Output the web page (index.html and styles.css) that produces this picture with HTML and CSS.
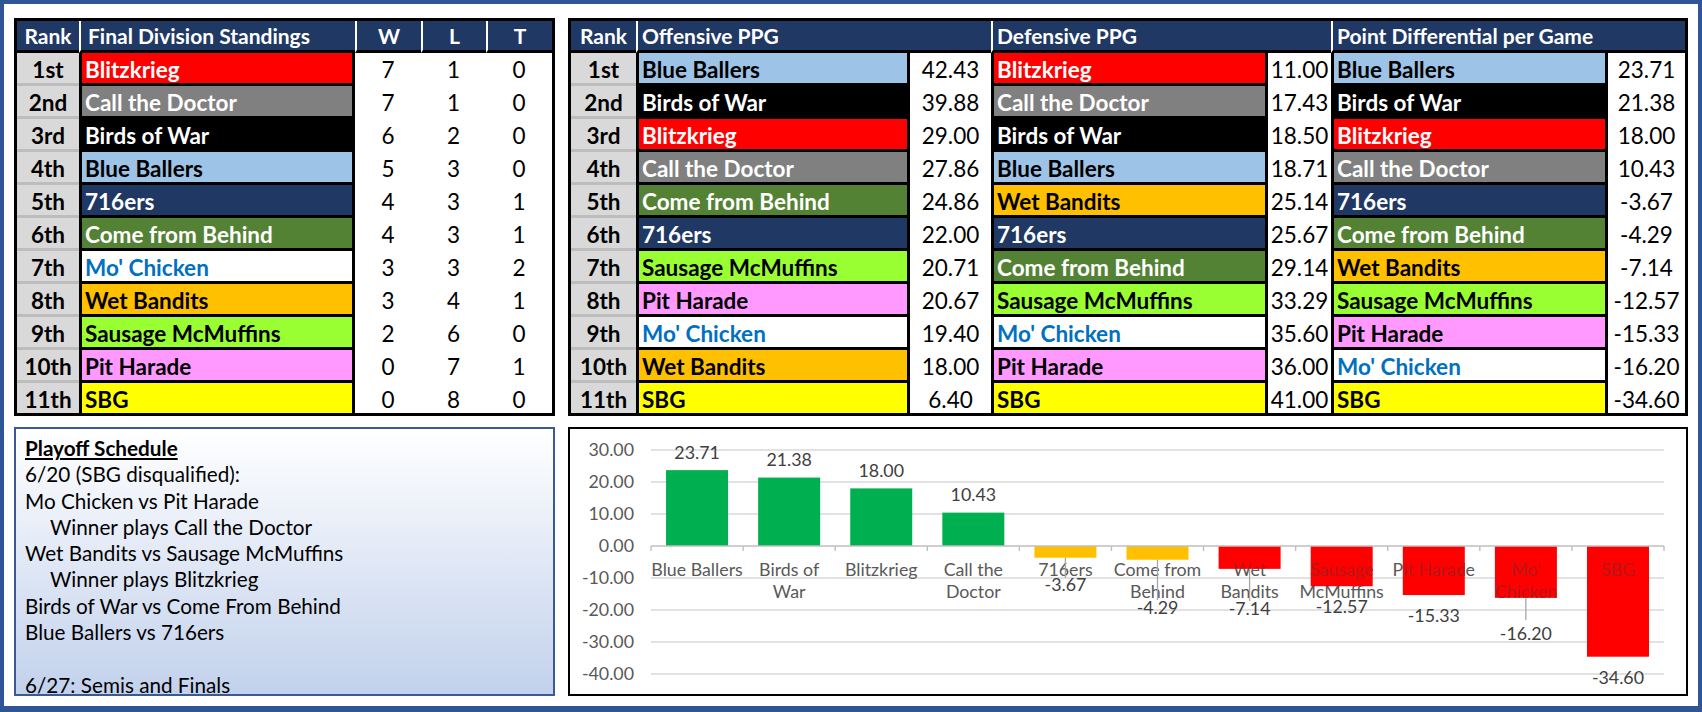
FILE: index.html
```html
<!DOCTYPE html>
<html>
<head>
<meta charset="utf-8">
<link rel="stylesheet" href="styles.css">
</head>
<body>
<div class="frame">
  <div class="top">
    <div class="tbl standings">
      <div class="hd c">Rank</div>
      <div class="hd sep lft">Final Division Standings</div>
      <div class="hd sep c">W</div>
      <div class="hd sep c">L</div>
      <div class="hd sep c">T</div>

      <div class="rk">1st</div><div class="nm blitz">Blitzkrieg</div><div class="v">7</div><div class="v">1</div><div class="v">0</div>
      <div class="rk">2nd</div><div class="nm doctor">Call the Doctor</div><div class="v">7</div><div class="v">1</div><div class="v">0</div>
      <div class="rk">3rd</div><div class="nm birds">Birds of War</div><div class="v">6</div><div class="v">2</div><div class="v">0</div>
      <div class="rk">4th</div><div class="nm blue">Blue Ballers</div><div class="v">5</div><div class="v">3</div><div class="v">0</div>
      <div class="rk">5th</div><div class="nm s716">716ers</div><div class="v">4</div><div class="v">3</div><div class="v">1</div>
      <div class="rk">6th</div><div class="nm cfb">Come from Behind</div><div class="v">4</div><div class="v">3</div><div class="v">1</div>
      <div class="rk">7th</div><div class="nm mo">Mo' Chicken</div><div class="v">3</div><div class="v">3</div><div class="v">2</div>
      <div class="rk">8th</div><div class="nm wet">Wet Bandits</div><div class="v">3</div><div class="v">4</div><div class="v">1</div>
      <div class="rk">9th</div><div class="nm saus">Sausage McMuffins</div><div class="v">2</div><div class="v">6</div><div class="v">0</div>
      <div class="rk">10th</div><div class="nm pit">Pit Harade</div><div class="v">0</div><div class="v">7</div><div class="v">1</div>
      <div class="rk lr">11th</div><div class="nm sbg lr">SBG</div><div class="v lr">0</div><div class="v lr">8</div><div class="v lr">0</div>
    </div>

    <div class="tbl ppg">
      <div class="hd c">Rank</div>
      <div class="hd sep span2">Offensive PPG</div>
      <div class="hd sep span2">Defensive PPG</div>
      <div class="hd sep span2">Point Differential per Game</div>

      <div class="rk">1st</div><div class="nm blue">Blue Ballers</div><div class="v">42.43</div><div class="nm blitz">Blitzkrieg</div><div class="v">11.00</div><div class="nm blue">Blue Ballers</div><div class="v">23.71</div>
      <div class="rk">2nd</div><div class="nm birds">Birds of War</div><div class="v">39.88</div><div class="nm doctor">Call the Doctor</div><div class="v">17.43</div><div class="nm birds">Birds of War</div><div class="v">21.38</div>
      <div class="rk">3rd</div><div class="nm blitz">Blitzkrieg</div><div class="v">29.00</div><div class="nm birds">Birds of War</div><div class="v">18.50</div><div class="nm blitz">Blitzkrieg</div><div class="v">18.00</div>
      <div class="rk">4th</div><div class="nm doctor">Call the Doctor</div><div class="v">27.86</div><div class="nm blue">Blue Ballers</div><div class="v">18.71</div><div class="nm doctor">Call the Doctor</div><div class="v">10.43</div>
      <div class="rk">5th</div><div class="nm cfb">Come from Behind</div><div class="v">24.86</div><div class="nm wet">Wet Bandits</div><div class="v">25.14</div><div class="nm s716">716ers</div><div class="v">-3.67</div>
      <div class="rk">6th</div><div class="nm s716">716ers</div><div class="v">22.00</div><div class="nm s716">716ers</div><div class="v">25.67</div><div class="nm cfb">Come from Behind</div><div class="v">-4.29</div>
      <div class="rk">7th</div><div class="nm saus">Sausage McMuffins</div><div class="v">20.71</div><div class="nm cfb">Come from Behind</div><div class="v">29.14</div><div class="nm wet">Wet Bandits</div><div class="v">-7.14</div>
      <div class="rk">8th</div><div class="nm pit">Pit Harade</div><div class="v">20.67</div><div class="nm saus">Sausage McMuffins</div><div class="v">33.29</div><div class="nm saus">Sausage McMuffins</div><div class="v">-12.57</div>
      <div class="rk">9th</div><div class="nm mo">Mo' Chicken</div><div class="v">19.40</div><div class="nm mo">Mo' Chicken</div><div class="v">35.60</div><div class="nm pit">Pit Harade</div><div class="v">-15.33</div>
      <div class="rk">10th</div><div class="nm wet">Wet Bandits</div><div class="v">18.00</div><div class="nm pit">Pit Harade</div><div class="v">36.00</div><div class="nm mo">Mo' Chicken</div><div class="v">-16.20</div>
      <div class="rk lr">11th</div><div class="nm sbg lr">SBG</div><div class="v lr">6.40</div><div class="nm sbg lr">SBG</div><div class="v lr">41.00</div><div class="nm sbg lr">SBG</div><div class="v lr">-34.60</div>
    </div>
  </div>

  <div class="bottom">
    <div class="playoff">
      <div class="ttl">Playoff Schedule</div>
      <div>6/20 (SBG disqualified):</div>
      <div>Mo Chicken vs Pit Harade</div>
      <div class="ind">Winner plays Call the Doctor</div>
      <div>Wet Bandits vs Sausage McMuffins</div>
      <div class="ind">Winner plays Blitzkrieg</div>
      <div>Birds of War vs Come From Behind</div>
      <div>Blue Ballers vs 716ers</div>
      <div class="blank"></div>
      <div>6/27: Semis and Finals</div>
    </div>

    <div class="chart">
      <svg width="1116" height="265" viewBox="0 0 1116 265" xmlns="http://www.w3.org/2000/svg">
        <defs>
          <clipPath id="redclip">
            <rect x="648.6" y="117" width="62" height="22.85"/>
            <rect x="740.7" y="117" width="62" height="40.22"/>
            <rect x="832.8" y="117" width="62" height="49.06"/>
            <rect x="924.9" y="117" width="62" height="51.84"/>
            <rect x="1017" y="117" width="62" height="110.72"/>
          </clipPath>
        </defs>
        <g class="grid">
          <line x1="81" y1="21" x2="1094" y2="21"/>
          <line x1="81" y1="53" x2="1094" y2="53"/>
          <line x1="81" y1="85" x2="1094" y2="85"/>
          <line x1="81" y1="149" x2="1094" y2="149"/>
          <line x1="81" y1="181" x2="1094" y2="181"/>
          <line x1="81" y1="213" x2="1094" y2="213"/>
          <line x1="81" y1="245" x2="1094" y2="245"/>
        </g>
        <g class="ylab">
          <text x="64" y="27">30.00</text>
          <text x="64" y="59">20.00</text>
          <text x="64" y="91">10.00</text>
          <text x="64" y="123">0.00</text>
          <text x="64" y="155">-10.00</text>
          <text x="64" y="187">-20.00</text>
          <text x="64" y="219">-30.00</text>
          <text x="64" y="251">-40.00</text>
        </g>
        <g class="cat">
          <text x="127.05" y="146.5">Blue Ballers</text>
          <text x="219.14" y="146.5">Birds of</text><text x="219.14" y="168.5">War</text>
          <text x="311.23" y="146.5">Blitzkrieg</text>
          <text x="403.32" y="146.5">Call the</text><text x="403.32" y="168.5">Doctor</text>
          <text x="495.41" y="146.5">716ers</text>
          <text x="587.5" y="146.5">Come from</text><text x="587.5" y="168.5">Behind</text>
          <text x="679.59" y="146.5">Wet</text><text x="679.59" y="168.5">Bandits</text>
          <text x="771.68" y="146.5">Sausage</text><text x="771.68" y="168.5">McMuffins</text>
          <text x="863.77" y="146.5">Pit Harade</text>
          <text x="955.86" y="146.5">Mo'</text><text x="955.86" y="168.5">Chicken</text>
          <text x="1047.95" y="146.5">SBG</text>
        </g>
        <g>
          <rect class="g" x="96.05" y="41.13" width="62" height="75.87"/>
          <rect class="g" x="188.14" y="48.58" width="62" height="68.42"/>
          <rect class="g" x="280.23" y="59.4" width="62" height="57.6"/>
          <rect class="g" x="372.32" y="83.62" width="62" height="33.38"/>
          <rect class="o" x="464.41" y="117" width="62" height="11.74"/>
          <rect class="o" x="556.5" y="117" width="62" height="13.73"/>
          <rect class="r" x="648.6" y="117" width="62" height="22.85"/>
          <rect class="r" x="740.7" y="117" width="62" height="40.22"/>
          <rect class="r" x="832.8" y="117" width="62" height="49.06"/>
          <rect class="r" x="924.9" y="117" width="62" height="51.84"/>
          <rect class="r" x="1017" y="117" width="62" height="110.72"/>
        </g>
        <g class="cat cat-in" clip-path="url(#redclip)">
          <text x="679.59" y="146.5">Wet</text><text x="679.59" y="168.5">Bandits</text>
          <text x="771.68" y="146.5">Sausage</text><text x="771.68" y="168.5">McMuffins</text>
          <text x="863.77" y="146.5">Pit Harade</text>
          <text x="955.86" y="146.5">Mo'</text><text x="955.86" y="168.5">Chicken</text>
          <text x="1047.95" y="146.5">SBG</text>
        </g>
        <g class="axis">
          <line x1="81" y1="117" x2="1094" y2="117"/>
          <line x1="81" y1="117" x2="81" y2="122"/>
          <line x1="173.09" y1="117" x2="173.09" y2="122"/>
          <line x1="265.18" y1="117" x2="265.18" y2="122"/>
          <line x1="357.27" y1="117" x2="357.27" y2="122"/>
          <line x1="449.36" y1="117" x2="449.36" y2="122"/>
          <line x1="541.45" y1="117" x2="541.45" y2="122"/>
          <line x1="633.55" y1="117" x2="633.55" y2="122"/>
          <line x1="725.64" y1="117" x2="725.64" y2="122"/>
          <line x1="817.73" y1="117" x2="817.73" y2="122"/>
          <line x1="909.82" y1="117" x2="909.82" y2="122"/>
          <line x1="1001.91" y1="117" x2="1001.91" y2="122"/>
          <line x1="1094" y1="117" x2="1094" y2="122"/>
        </g>
        <g class="lead">
          <line x1="495.41" y1="128.7" x2="495.41" y2="149"/>
          <line x1="587.5" y1="130.7" x2="587.5" y2="171"/>
          <line x1="679.59" y1="139.9" x2="679.59" y2="172"/>
          <line x1="955.86" y1="168.8" x2="955.86" y2="191"/>
        </g>
        <g class="dlab">
          <text x="127.05" y="29.6">23.71</text>
          <text x="219.14" y="37.1">21.38</text>
          <text x="311.23" y="47.9">18.00</text>
          <text x="403.32" y="72.1">10.43</text>
          <text x="495.41" y="162.3">-3.67</text>
          <text x="587.5" y="185">-4.29</text>
          <text x="679.59" y="186">-7.14</text>
          <text x="771.68" y="184">-12.57</text>
          <text x="863.77" y="192.6">-15.33</text>
          <text x="955.86" y="211.3">-16.20</text>
          <text x="1047.95" y="254.6">-34.60</text>
        </g>
      </svg>
    </div>
  </div>
</div>
</body>
</html>
```

FILE: styles.css
```css
* { box-sizing: border-box; }

body {
  margin: 0;
  font-family: Lato, "Liberation Sans", sans-serif;
  background: #fff;
}

.frame {
  width: 1702px;
  height: 712px;
  border: 4px solid #2f5597;
  border-bottom-width: 6px;
  padding: 14px 10px 10px;
  display: flex;
  flex-direction: column;
  gap: 11px;
  background: #fff;
}

.top {
  display: flex;
  gap: 13px;
  height: 398px;
}

.tbl {
  display: grid;
  border: 3px solid #000;
  background: #fff;
  font-weight: 700;
  font-size: 22.5px;
  grid-template-rows: 32px repeat(10, 33px) 30px;
}

.standings {
  width: 541px;
  grid-template-columns: 62px 276px 66px 65px 66px;
}

.ppg {
  width: 1120px;
  grid-template-columns: 65px 274px 81px 277px 63px 277px 77px;
}

.hd {
  background: #203864;
  color: #fff;
  border-bottom: 3px solid #000;
  display: flex;
  align-items: center;
  padding-left: 4px;
  white-space: nowrap;
  font-size: 21px;
}

.hd.c {
  justify-content: center;
  padding-left: 0;
}

.hd.lft { padding-left: 7px; }

.hd.sep { border-left: 2px solid #fff; }

.hd.span2 { grid-column: span 2; }

.rk {
  background: #d9d9d9;
  border-bottom: 3px solid #bdbdbd;
  display: flex;
  align-items: center;
  justify-content: center;
  padding-top: 2px;
  color: #000;
}

.nm {
  border: 3px solid #000;
  border-top: 0;
  display: flex;
  align-items: center;
  padding: 2px 0 0 3px;
  white-space: nowrap;
  overflow: hidden;
}

.v {
  display: flex;
  align-items: center;
  justify-content: center;
  font-weight: 400;
  background: #fff;
  border-bottom: 3px solid transparent;
  padding-top: 2px;
  color: #000;
}

.lr.rk, .lr.nm, .lr.v { border-bottom: 0; }

.blitz { background: #ff0000; color: #fff; }
.doctor { background: #808080; color: #fff; }
.birds { background: #000; color: #fff; }
.blue { background: #9dc3e6; color: #000; }
.s716 { background: #203864; color: #fff; }
.cfb { background: #548235; color: #fff; }
.mo { background: #fff; color: #0070c0; }
.wet { background: #ffc000; color: #000; }
.saus { background: #99ff33; color: #000; }
.pit { background: #ff99ff; color: #000; }
.sbg { background: #ffff00; color: #000; }

.bottom {
  display: flex;
  gap: 13px;
  height: 269px;
}

.playoff {
  width: 541px;
  border: 2px solid #3b5a94;
  background: linear-gradient(#ffffff, #c2d1ec);
  padding: 6px 9px 0;
  font-size: 20.7px;
  line-height: 26.3px;
  color: #000;
  overflow: hidden;
  white-space: nowrap;
}

.playoff .ttl {
  font-weight: 700;
  text-decoration: underline;
}

.playoff .ind { padding-left: 25px; }

.playoff .blank { height: 26.3px; }

.chart {
  width: 1120px;
  border: 2px solid #000;
  background: #fff;
}

.chart svg { display: block; }

.grid line { stroke: #d9d9d9; stroke-width: 1.4; }
.axis line { stroke: #bfbfbf; stroke-width: 1.4; }
.lead line { stroke: #a6a6a6; stroke-width: 1.3; }

.ylab text {
  font-family: Lato, "Liberation Sans", sans-serif;
  font-size: 17.8px;
  fill: #595959;
  text-anchor: end;
}

.cat text {
  font-family: Lato, "Liberation Sans", sans-serif;
  font-size: 17.8px;
  fill: #595959;
  text-anchor: middle;
}

.cat-in text { fill: #b41818; }

.dlab text {
  font-family: Lato, "Liberation Sans", sans-serif;
  font-size: 17.8px;
  fill: #404040;
  text-anchor: middle;
}

.g { fill: #00b050; }
.o { fill: #ffc000; }
.r { fill: #ff0000; }
```
